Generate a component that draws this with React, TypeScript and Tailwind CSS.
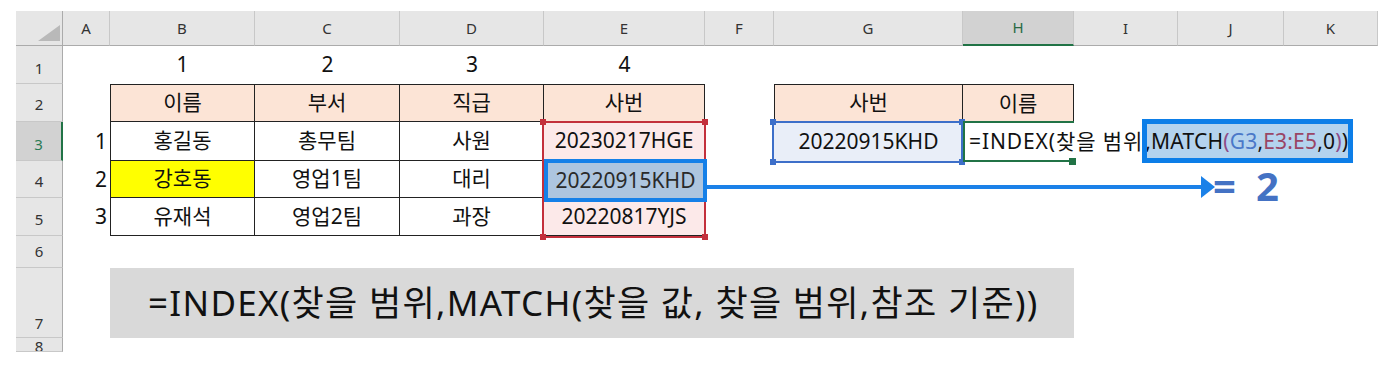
import React from 'react';

const colHeads = [
  { l: 'A', cls: 'col-start-2 bg-[#e6e6e6] border-b border-b-[#ababab] text-[#333]' },
  { l: 'B', cls: 'col-start-3 bg-[#e6e6e6] border-b border-b-[#ababab] text-[#333]' },
  { l: 'C', cls: 'col-start-4 bg-[#e6e6e6] border-b border-b-[#ababab] text-[#333]' },
  { l: 'D', cls: 'col-start-5 bg-[#e6e6e6] border-b border-b-[#ababab] text-[#333]' },
  { l: 'E', cls: 'col-start-6 bg-[#e6e6e6] border-b border-b-[#ababab] text-[#333]' },
  { l: 'F', cls: 'col-start-7 bg-[#e6e6e6] border-b border-b-[#ababab] text-[#333]' },
  { l: 'G', cls: 'col-start-8 bg-[#e6e6e6] border-b border-b-[#ababab] text-[#333]' },
  { l: 'H', cls: 'col-start-9 bg-[#d2d2d2] border-b-2 border-b-[#217346] text-[#2a6a45]' },
  { l: 'I', cls: 'col-start-10 bg-[#e6e6e6] border-b border-b-[#ababab] text-[#333]' },
  { l: 'J', cls: 'col-start-11 bg-[#e6e6e6] border-b border-b-[#ababab] text-[#333]' },
  { l: 'K', cls: 'col-start-12 bg-[#e6e6e6] border-b border-b-[#ababab] text-[#333]' },
];

const rowHeads = [
  { n: '1', cls: 'row-start-2 bg-[#e6e6e6] border-r border-r-[#ababab] items-end pb-[7px] text-[#333]' },
  { n: '2', cls: 'row-start-3 bg-[#e6e6e6] border-r border-r-[#ababab] items-end pb-[9px] text-[#333]' },
  { n: '3', cls: 'row-start-4 bg-[#d2d2d2] border-r-2 border-r-[#217346] items-end pb-[8px] text-[#2a7a55]' },
  { n: '4', cls: 'row-start-5 bg-[#e6e6e6] border-r border-r-[#ababab] items-end pb-[8px] text-[#333]' },
  { n: '5', cls: 'row-start-6 bg-[#e6e6e6] border-r border-r-[#ababab] items-end pb-[8px] text-[#333]' },
  { n: '6', cls: 'row-start-7 bg-[#e6e6e6] border-r border-r-[#ababab] items-end pb-[8px] text-[#333]' },
  { n: '7', cls: 'row-start-8 bg-[#e6e6e6] border-r border-r-[#ababab] items-end pb-[6px] text-[#333]' },
  { n: '8', cls: 'row-start-9 bg-[#e6e6e6] border-r border-r-[#ababab] items-start pt-[1px] text-[#333]' },
];

// 표 본문 (B2:E5)
const tableCells = [
  { t: '이름', cls: 'col-start-3 row-start-3 border-l border-t bg-[#fce4d6]' },
  { t: '부서', cls: 'col-start-4 row-start-3 border-t bg-[#fce4d6]' },
  { t: '직급', cls: 'col-start-5 row-start-3 border-t bg-[#fce4d6]' },
  { t: '사번', cls: 'col-start-6 row-start-3 border-t bg-[#fce4d6]' },
  { t: '홍길동', cls: 'col-start-3 row-start-4 border-l' },
  { t: '총무팀', cls: 'col-start-4 row-start-4' },
  { t: '사원', cls: 'col-start-5 row-start-4' },
  { t: '20230217HGE', cls: 'col-start-6 row-start-4 bg-[#fce9e9]' },
  { t: '강호동', cls: 'col-start-3 row-start-5 border-l bg-[#ffff00]' },
  { t: '영업1팀', cls: 'col-start-4 row-start-5' },
  { t: '대리', cls: 'col-start-5 row-start-5' },
  { t: '', cls: 'col-start-6 row-start-5 bg-[#fce9e9]' },
  { t: '유재석', cls: 'col-start-3 row-start-6 border-l' },
  { t: '영업2팀', cls: 'col-start-4 row-start-6' },
  { t: '과장', cls: 'col-start-5 row-start-6' },
  { t: '20220817YJS', cls: 'col-start-6 row-start-6 bg-[#fce9e9]' },
];

function RangeBox({ className, dot }: { className: string; dot: string }) {
  return (
    <div className={`absolute border-2 ${className}`}>
      <span className={`absolute -left-[4px] -top-[4px] w-[6px] h-[6px] ${dot}`} />
      <span className={`absolute -right-[4px] -top-[4px] w-[6px] h-[6px] ${dot}`} />
      <span className={`absolute -left-[4px] -bottom-[4px] w-[6px] h-[6px] ${dot}`} />
      <span className={`absolute -right-[4px] -bottom-[4px] w-[6px] h-[6px] ${dot}`} />
    </div>
  );
}

export default function App() {
  return (
    <div className="w-[1392px] h-[372px] bg-white pt-[11px] pl-[16px] font-['Noto_Sans','Noto_Sans_CJK_KR',sans-serif] text-[#111]">
      <div className="relative grid grid-cols-[47px_47px_145px_145px_144px_161px_69px_189px_111px_104px_106px_94px] grid-rows-[35px_38px_38px_39px_37px_38px_32px_70px_14px] w-[1362px] h-[341px] overflow-hidden">
        {/* 왼쪽 위 모서리 */}
        <div className="col-start-1 row-start-1 bg-[#e6e6e6] border-r border-b border-[#ababab]">
          <svg width="46" height="34" viewBox="0 0 46 34">
            <polygon points="22,30 44,30 44,14" fill="#b9b9b9" />
          </svg>
        </div>

        {colHeads.map((c) => (
          <div
            key={c.l}
            className={`row-start-1 flex items-center justify-center border-r border-r-[#c8c8c8] text-[15px] ${c.cls}`}
          >
            {c.l}
          </div>
        ))}

        {rowHeads.map((r) => (
          <div
            key={r.n}
            className={`col-start-1 flex justify-center border-b border-b-[#c8c8c8] text-[15px] leading-none overflow-hidden ${r.cls}`}
          >
            {r.n}
          </div>
        ))}

        {/* 1행 번호 */}
        <div className="col-start-3 row-start-2 flex items-center justify-center text-[21px]">1</div>
        <div className="col-start-4 row-start-2 flex items-center justify-center text-[21px]">2</div>
        <div className="col-start-5 row-start-2 flex items-center justify-center text-[21px]">3</div>
        <div className="col-start-6 row-start-2 flex items-center justify-center text-[21px]">4</div>

        {/* A열 순번 */}
        <div className="col-start-2 row-start-4 flex items-center justify-end pr-[3px] text-[21px]">1</div>
        <div className="col-start-2 row-start-5 flex items-center justify-end pr-[3px] text-[21px]">2</div>
        <div className="col-start-2 row-start-6 flex items-center justify-end pr-[3px] text-[21px]">3</div>

        {tableCells.map((c, i) => (
          <div
            key={i}
            className={`flex items-center justify-center border-r border-b border-[#222] text-[21px] ${c.cls}`}
          >
            {c.t}
          </div>
        ))}

        {/* G2:H3 */}
        <div className="col-start-8 row-start-3 flex items-center justify-center border border-[#222] bg-[#fce4d6] text-[21px]">
          사번
        </div>
        <div className="col-start-9 row-start-3 flex items-center justify-center border-t border-r border-[#222] bg-[#fce4d6] text-[21px]">
          이름
        </div>
        <div className="col-start-8 row-start-4 flex items-center justify-center bg-[#e9eef8] text-[21px]">
          20220915KHD
        </div>
        <div className="relative z-10 col-start-9 row-start-4 flex items-center pl-[6px] text-[21px] whitespace-nowrap">
          <span className="tracking-[0.9px]">=INDEX(찾을 범위</span>
          <span className="ml-[2px] tracking-[0.2px]">
            ,MATCH
            <span className="text-[#8e4a87]">(</span>
            <span className="text-[#4a78c8]">G3</span>,
            <span className="text-[#9a4565]">E3:E5</span>,0
            <span className="text-[#8e4a87]">)</span>)
          </span>
        </div>

        {/* 수식 설명 */}
        <div className="col-start-3 col-span-7 row-start-8 flex items-center pl-[38px] bg-[#d9d9d9] text-[35px] tracking-[1.3px] whitespace-nowrap">
          =INDEX(찾을 범위,MATCH(찾을 값, 찾을 범위,참조 기준))
        </div>

        {/* 참조 범위 표시 */}
        <RangeBox className="left-[526px] top-[110px] w-[164px] h-[117px] border-[#c3303c]" dot="bg-[#c3303c]" />
        <RangeBox className="left-[756px] top-[110px] w-[191px] h-[42px] border-[#3d6fc9]" dot="bg-[#3d6fc9]" />

        {/* 활성 셀 H3 */}
        <div className="absolute left-[947px] top-[110px] w-[111px] h-[41px] border-l-2 border-t-2 border-b-2 border-[#217346]" />
        <div className="absolute left-[1053px] top-[147px] w-[7px] h-[7px] bg-[#217346]" />

        {/* E4 강조 */}
        <div className="absolute left-[528px] top-[148px] w-[163px] h-[43px] flex items-center justify-center border-4 border-[#1580e8] bg-[#adc5df] text-[21px] text-[#2a2a2a]">
          20220915KHD
        </div>

        {/* MATCH 부분 강조 */}
        <div className="absolute z-0 left-[1126px] top-[108px] w-[211px] h-[44px] bg-[#b4d3ee]" />
        <div className="absolute z-20 left-[1126px] top-[108px] w-[211px] h-[44px] border-[5px] border-[#0c7ee8]" />

        {/* 화살표 */}
        <svg className="absolute left-[691px] top-[164px]" width="512" height="24" viewBox="0 0 512 24">
          <rect x="0" y="10" width="498" height="4" fill="#1b81e8" />
          <polygon points="494,1 508,12 494,23" fill="#1b81e8" />
        </svg>

        <div className="absolute left-[1197px] top-[155px] flex gap-[20px] text-[40px] font-bold leading-[40px] text-[#4472c4]">
          <span>=</span>
          <span>2</span>
        </div>
      </div>
    </div>
  );
}
